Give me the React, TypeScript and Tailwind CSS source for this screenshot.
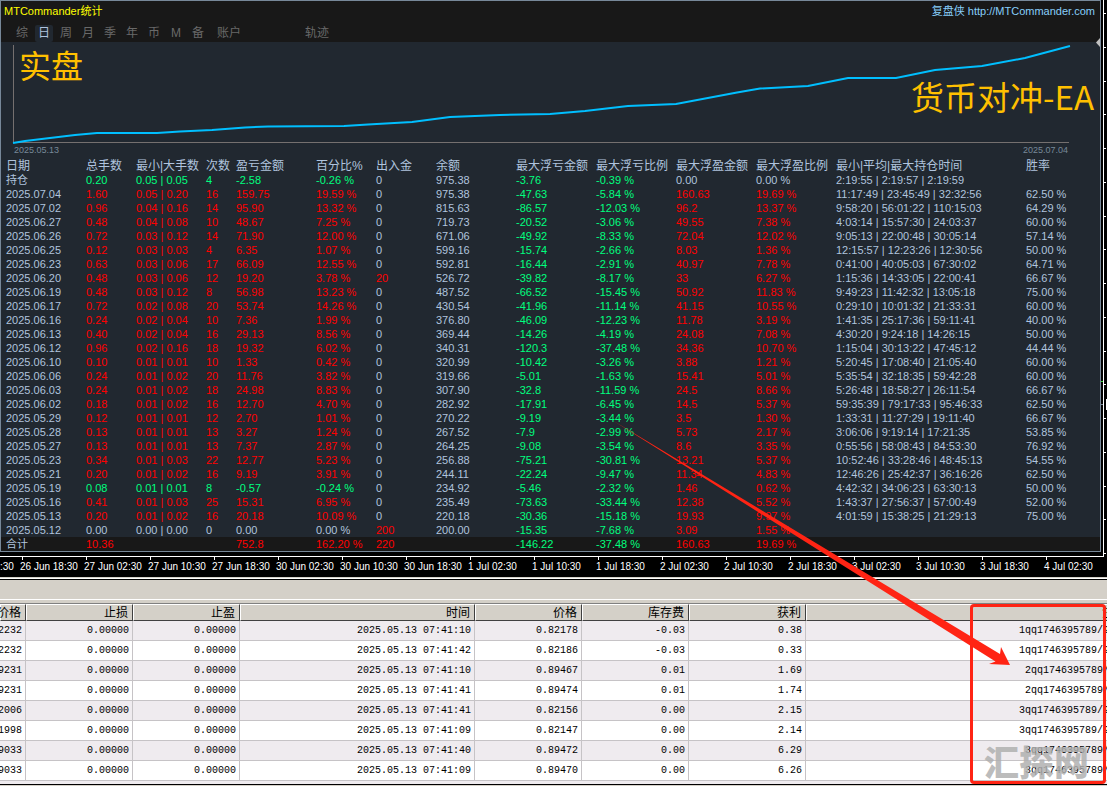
import clsx from 'clsx'

const tabs = ['综', '日', '周', '月', '季', '年', '币', 'M', '备']

const columns: { label: string; width: string }[] = [
  { label: '日期', width: 'w-[85px]' },
  { label: '总手数', width: 'w-[50px]' },
  { label: '最小|大手数', width: 'w-[70px]' },
  { label: '次数', width: 'w-[30px]' },
  { label: '盈亏金额', width: 'w-[80px]' },
  { label: '百分比%', width: 'w-[60px]' },
  { label: '出入金', width: 'w-[60px]' },
  { label: '余额', width: 'w-[80px]' },
  { label: '最大浮亏金额', width: 'w-[80px]' },
  { label: '最大浮亏比例', width: 'w-[80px]' },
  { label: '最大浮盈金额', width: 'w-[80px]' },
  { label: '最大浮盈比例', width: 'w-[80px]' },
  { label: '最小|平均|最大持仓时间', width: 'w-[190px]' },
  { label: '胜率', width: 'w-auto' },
]

// one array per day, same order as columns
const days: string[][] = [
  ['持仓', '0.20', '0.05 | 0.05', '4', '-2.58', '-0.26 %', '0', '975.38', '-3.76', '-0.39 %', '0.00', '0.00 %', '2:19:55 | 2:19:57 | 2:19:59', ''],
  ['2025.07.04', '1.60', '0.05 | 0.20', '16', '159.75', '19.59 %', '0', '975.38', '-47.63', '-5.84 %', '160.63', '19.69 %', '11:17:49 | 23:45:49 | 32:32:56', '62.50 %'],
  ['2025.07.02', '0.96', '0.04 | 0.16', '14', '95.90', '13.32 %', '0', '815.63', '-86.57', '-12.03 %', '96.2', '13.37 %', '9:58:20 | 56:01:22 | 110:15:03', '64.29 %'],
  ['2025.06.27', '0.48', '0.04 | 0.08', '10', '48.67', '7.25 %', '0', '719.73', '-20.52', '-3.06 %', '49.55', '7.38 %', '4:03:14 | 15:57:30 | 24:03:37', '60.00 %'],
  ['2025.06.26', '0.72', '0.03 | 0.12', '14', '71.90', '12.00 %', '0', '671.06', '-49.92', '-8.33 %', '72.04', '12.02 %', '9:05:13 | 22:00:48 | 30:05:14', '57.14 %'],
  ['2025.06.25', '0.12', '0.03 | 0.03', '4', '6.35', '1.07 %', '0', '599.16', '-15.74', '-2.66 %', '8.03', '1.36 %', '12:15:57 | 12:23:26 | 12:30:56', '50.00 %'],
  ['2025.06.23', '0.63', '0.03 | 0.06', '17', '66.09', '12.55 %', '0', '592.81', '-16.44', '-2.91 %', '40.97', '7.78 %', '0:41:00 | 40:05:03 | 67:30:02', '64.71 %'],
  ['2025.06.20', '0.48', '0.03 | 0.06', '12', '19.20', '3.78 %', '20', '526.72', '-39.82', '-8.17 %', '33', '6.27 %', '1:15:36 | 14:33:05 | 22:00:41', '66.67 %'],
  ['2025.06.19', '0.48', '0.03 | 0.12', '8', '56.98', '13.23 %', '0', '487.52', '-66.52', '-15.45 %', '50.92', '11.83 %', '9:49:23 | 11:42:32 | 13:05:18', '75.00 %'],
  ['2025.06.17', '0.72', '0.02 | 0.08', '20', '53.74', '14.26 %', '0', '430.54', '-41.96', '-11.14 %', '41.15', '10.55 %', '0:29:10 | 10:01:32 | 21:33:31', '60.00 %'],
  ['2025.06.16', '0.24', '0.02 | 0.04', '10', '7.36', '1.99 %', '0', '376.80', '-46.09', '-12.23 %', '11.78', '3.19 %', '1:41:35 | 25:17:36 | 59:11:41', '40.00 %'],
  ['2025.06.13', '0.40', '0.02 | 0.04', '16', '29.13', '8.56 %', '0', '369.44', '-14.26', '-4.19 %', '24.08', '7.08 %', '4:30:20 | 9:24:18 | 14:26:15', '50.00 %'],
  ['2025.06.12', '0.96', '0.02 | 0.16', '18', '19.32', '6.02 %', '0', '340.31', '-120.3', '-37.48 %', '34.36', '10.70 %', '1:15:04 | 30:13:22 | 47:45:12', '44.44 %'],
  ['2025.06.10', '0.10', '0.01 | 0.01', '10', '1.33', '0.42 %', '0', '320.99', '-10.42', '-3.26 %', '3.88', '1.21 %', '5:20:45 | 17:08:40 | 21:05:40', '60.00 %'],
  ['2025.06.06', '0.24', '0.01 | 0.02', '20', '11.76', '3.82 %', '0', '319.66', '-5.01', '-1.63 %', '15.41', '5.01 %', '5:35:54 | 32:18:35 | 59:42:28', '60.00 %'],
  ['2025.06.03', '0.24', '0.01 | 0.02', '18', '24.98', '8.83 %', '0', '307.90', '-32.8', '-11.59 %', '24.5', '8.66 %', '5:26:48 | 18:58:27 | 26:11:54', '66.67 %'],
  ['2025.06.02', '0.18', '0.01 | 0.02', '16', '12.70', '4.70 %', '0', '282.92', '-17.91', '-6.45 %', '14.5', '5.37 %', '59:35:39 | 79:17:33 | 95:46:33', '62.50 %'],
  ['2025.05.29', '0.12', '0.01 | 0.01', '12', '2.70', '1.01 %', '0', '270.22', '-9.19', '-3.44 %', '3.5', '1.30 %', '1:33:31 | 11:27:29 | 19:11:40', '66.67 %'],
  ['2025.05.28', '0.13', '0.01 | 0.01', '13', '3.27', '1.24 %', '0', '267.52', '-7.9', '-2.99 %', '5.73', '2.17 %', '3:06:06 | 9:19:14 | 17:21:35', '53.85 %'],
  ['2025.05.27', '0.13', '0.01 | 0.01', '13', '7.37', '2.87 %', '0', '264.25', '-9.08', '-3.54 %', '8.6', '3.35 %', '0:55:56 | 58:08:43 | 84:53:30', '76.92 %'],
  ['2025.05.23', '0.34', '0.01 | 0.03', '22', '12.77', '5.23 %', '0', '256.88', '-75.21', '-30.81 %', '13.21', '5.37 %', '10:52:46 | 33:28:46 | 48:45:13', '54.55 %'],
  ['2025.05.21', '0.20', '0.01 | 0.02', '16', '9.19', '3.91 %', '0', '244.11', '-22.24', '-9.47 %', '11.34', '4.83 %', '12:46:26 | 25:42:37 | 36:16:26', '62.50 %'],
  ['2025.05.19', '0.08', '0.01 | 0.01', '8', '-0.57', '-0.24 %', '0', '234.92', '-5.46', '-2.32 %', '1.46', '0.62 %', '4:42:32 | 34:06:23 | 63:30:13', '50.00 %'],
  ['2025.05.16', '0.41', '0.01 | 0.03', '25', '15.31', '6.95 %', '0', '235.49', '-73.63', '-33.44 %', '12.38', '5.52 %', '1:43:37 | 27:56:37 | 57:00:49', '52.00 %'],
  ['2025.05.13', '0.20', '0.01 | 0.02', '16', '20.18', '10.09 %', '0', '220.18', '-30.36', '-15.18 %', '19.93', '9.97 %', '4:01:59 | 15:38:25 | 21:29:13', '75.00 %'],
  ['2025.05.12', '0.00', '0.00 | 0.00', '0', '0.00', '0.00 %', '200', '200.00', '-15.35', '-7.68 %', '3.09', '1.55 %', '', ''],
]

const total = ['合计', '10.36', '', '', '752.8', '162.20 %', '220', '', '-146.22', '-37.48 %', '160.63', '19.69 %', '', '']

const axisLabels = [
  '26 Jun 10:30', '26 Jun 18:30', '27 Jun 02:30', '27 Jun 10:30', '27 Jun 18:30', '30 Jun 02:30',
  '30 Jun 10:30', '30 Jun 18:30', '1 Jul 02:30', '1 Jul 10:30', '1 Jul 18:30', '2 Jul 02:30',
  '2 Jul 10:30', '2 Jul 18:30', '3 Jul 02:30', '3 Jul 10:30', '3 Jul 18:30', '4 Jul 02:30',
]

const orderColumns = [
  { label: '价格', width: 'w-[26px]' },
  { label: '止损', width: 'w-[107px]' },
  { label: '止盈', width: 'w-[107px]' },
  { label: '时间', width: 'w-[235px]' },
  { label: '价格', width: 'w-[107px]' },
  { label: '库存费', width: 'w-[107px]' },
  { label: '获利', width: 'w-[117px]' },
  { label: '注释', width: 'w-auto' },
]

const orders: string[][] = [
  ['0.82232', '0.00000', '0.00000', '2025.05.13 07:41:10', '0.82178', '-0.03', '0.38', '1qq1746395789/9'],
  ['0.82232', '0.00000', '0.00000', '2025.05.13 07:41:42', '0.82186', '-0.03', '0.33', '1qq1746395789/9'],
  ['0.89231', '0.00000', '0.00000', '2025.05.13 07:41:10', '0.89467', '0.01', '1.69', '2qq1746395789/'],
  ['0.89231', '0.00000', '0.00000', '2025.05.13 07:41:41', '0.89474', '0.01', '1.74', '2qq1746395789/'],
  ['0.82006', '0.00000', '0.00000', '2025.05.13 07:41:41', '0.82156', '0.00', '2.15', '3qq1746395789/9'],
  ['0.81998', '0.00000', '0.00000', '2025.05.13 07:41:09', '0.82147', '0.00', '2.14', '3qq1746395789/9'],
  ['0.89033', '0.00000', '0.00000', '2025.05.13 07:41:40', '0.89472', '0.00', '6.29', '3qq1746395789/'],
  ['0.89033', '0.00000', '0.00000', '2025.05.13 07:41:09', '0.89470', '0.00', '6.26', '3qq1746395789/'],
]

function signColor(value: string) {
  const n = parseFloat(value)
  if (n > 0) return 'text-[#ff0000]'
  if (n < 0) return 'text-[#00ff7f]'
  return 'text-[#b0c4de]'
}

function cellColor(row: string[], index: number) {
  // lots and trade counts follow the sign of the day's profit
  if (index >= 1 && index <= 5) return signColor(row[4])
  if (index === 6 || (index >= 8 && index <= 11)) return signColor(row[index])
  return 'text-[#b0c4de]'
}

function StatsRow({ row, className }: { row: string[]; className?: string }) {
  return (
    <tr className={clsx('h-[14px]', className)}>
      {row.map((value, i) => (
        <td key={i} className={clsx('p-0 whitespace-nowrap first:pl-[5px]', cellColor(row, i))}>
          {value}
        </td>
      ))}
    </tr>
  )
}

function EquityChart() {
  return (
    <div>
      <svg
        className="block h-[102px] w-full"
        viewBox="1 42 1099 102"
        preserveAspectRatio="none"
        fill="none"
        aria-hidden="true"
      >
        <path d="M13.5 45V142.500H1069" stroke="#75706f" />
        <path
          d="M13 143L25 141L50 138L75 135L97 133L157 133L180 131.500L212 130L245 127.500L268 126.500L344 126L368 124.500L412 122L450 117L500 115L550 114L585 111L628 106L676 104L737 92.500L760 88.500L808 86L848 78L896 78L935 70L982 66L1025 58L1070 46"
          stroke="#00bfff"
          strokeWidth="2"
        />
      </svg>
      <div className="flex h-[15px] justify-between pr-8 pl-[13px] text-[9px] leading-[12px] text-[#778899]">
        <span>2025.05.13</span>
        <span>2025.07.04</span>
      </div>
    </div>
  )
}

function StatsPanel() {
  return (
    <section className="relative min-w-0 flex-1 border border-[#778899] bg-[#212830]">
      <header className="bg-[#181818]">
        <div className="flex h-[21px] items-center justify-between pr-[5px] pl-[3px] text-[11px]">
          <h1 className="text-[#ffff00]">MTCommander统计</h1>
          <a href="http://MTCommander.com" className="text-[#87cefa]">
            复盘侠 http://MTCommander.com
          </a>
        </div>
        <nav className="flex h-5 items-end pl-[10px] text-[12px] text-[#696969]">
          {tabs.map((tab) => (
            <button
              key={tab}
              type="button"
              className={clsx(
                'mx-[2px] h-[17px] w-[18px] rounded-[2px] leading-[17px]',
                tab === '日' && 'bg-[#212830] text-[#b0c4de]',
              )}
            >
              {tab}
            </button>
          ))}
          <button type="button" className="ml-2 h-[17px] leading-[17px]">账户</button>
          <button type="button" className="ml-16 h-[17px] leading-[17px]">轨迹</button>
        </nav>
      </header>

      <EquityChart />

      <table className="w-full table-fixed border-collapse text-left text-[11px] leading-[14px]">
        <thead>
          <tr className="h-[14px] text-[12px] text-[#b0c4de]">
            {columns.map((column) => (
              <th
                key={column.label}
                className={clsx('p-0 font-normal whitespace-nowrap first:pl-[5px]', column.width)}
              >
                {column.label}
              </th>
            ))}
          </tr>
        </thead>
        <tbody>
          {days.map((row) => (
            <StatsRow key={row[0]} row={row} />
          ))}
        </tbody>
        <tfoot>
          <StatsRow row={total} className="bg-[#181818]" />
        </tfoot>
      </table>

      <p className="absolute top-10 left-[18px] font-['Noto_Sans_CJK_SC',sans-serif] text-[32px] leading-[46px] text-[#ffc000]">
        实盘
      </p>
      <p className="absolute top-[72px] right-[6px] font-['Noto_Sans_CJK_SC',sans-serif] text-[33px] leading-[46px] text-[#ffc000]">
        货币对冲-EA
      </p>
      <svg className="absolute top-[37px] right-0 h-[9px] w-1" viewBox="0 0 4 9" aria-hidden="true">
        <path d="M4 0V9L0 4.500Z" fill="#c0c0c0" />
      </svg>
    </section>
  )
}

function PriceScale() {
  const ticks = Array.from({ length: 17 }, (_, i) => 13 + Math.round(i * 33.75))
  return (
    <svg className="h-[556px] w-[6px] shrink-0" viewBox="0 0 6 556" aria-hidden="true">
      <path d="M2 0H3V556H2Z" fill="#fff" />
      {ticks.map((y) => (
        <path key={y} d={`M3 ${y}h2v1h-2z`} fill="#fff" />
      ))}
      <path d="M0 381h2v1h-2z" fill="#32cd32" />
      <path d="M0 404h2v1h-2z" fill="#778899" />
      <path d="M5 399h1v11h-1z" fill="#fff" />
    </svg>
  )
}

function OrderHistory() {
  return (
    <section className="bg-[#d4d0c8] pt-[19px]">
      <div className="border-t border-white pt-[3px]">
        <div className="h-[182px] overflow-hidden border-y border-t-[#808080] border-b-black bg-[#efebef]">
          <table className="w-[calc(100%+24px)] table-fixed border-separate border-spacing-0 text-right text-black">
            <thead className="bg-[#d4d0c8] text-[12px] leading-[14px]">
              <tr className="h-[17px]">
                {orderColumns.map((column, i) => (
                  <th
                    key={i}
                    className={clsx(
                      'border-t border-r border-b border-l border-t-white border-r-[#404040] border-b-[#404040] border-l-white p-0 pr-1 font-normal whitespace-nowrap',
                      column.width,
                    )}
                  >
                    <div className="flex justify-end">{column.label}</div>
                  </th>
                ))}
              </tr>
            </thead>
            <tbody className="font-['Liberation_Mono',monospace] text-[10px] leading-[14px]">
              {orders.map((order, i) => (
                <tr key={i} className="h-5 odd:bg-[#efebef] even:bg-white">
                  {order.map((value, j) => (
                    <td
                      key={j}
                      className="border-r border-b border-[#c6c3c6] p-0 pr-[3px] whitespace-nowrap last:pr-[21px]"
                    >
                      <div className="flex justify-end">{value}</div>
                    </td>
                  ))}
                </tr>
              ))}
            </tbody>
          </table>
        </div>
      </div>
      <div className="h-px" />
    </section>
  )
}

export default function App() {
  return (
    <main className="relative overflow-hidden bg-black font-['Liberation_Sans','Noto_Sans_CJK_SC',sans-serif]">
      <div className="flex h-[556px] items-start">
        <StatsPanel />
        <PriceScale />
      </div>

      <div className="mr-[3px] h-[21px] overflow-hidden border-t border-white">
        <div className="-ml-11 flex w-max text-[10px] leading-[13px] text-white">
          {axisLabels.map((label) => (
            <div key={label} className="w-16 shrink-0">
              <div className="ml-[2px] h-[3px] w-px bg-white" />
              {label}
            </div>
          ))}
        </div>
      </div>
      <div className="h-[3px] border-t border-b border-t-[#d4d0c8] border-b-black bg-white" />

      <OrderHistory />

      <p className="absolute right-[18px] bottom-0 font-['Noto_Sans_CJK_SC',sans-serif] text-[35px] leading-[50px] font-black text-[#b0b0b0]/85">
        汇探网
      </p>
      <div className="absolute right-px bottom-[2px] h-[180px] w-[136px] rounded-[4px] border-3 border-[#ff2414]" />
      <svg
        className="pointer-events-none absolute inset-0 h-full w-full"
        viewBox="0 0 1107 786"
        preserveAspectRatio="none"
        aria-hidden="true"
      >
        <path d="M612 420L1000 654L1001 647L1010 665L989 664L995.500 661.500Z" fill="#ff2414" />
      </svg>
    </main>
  )
}
